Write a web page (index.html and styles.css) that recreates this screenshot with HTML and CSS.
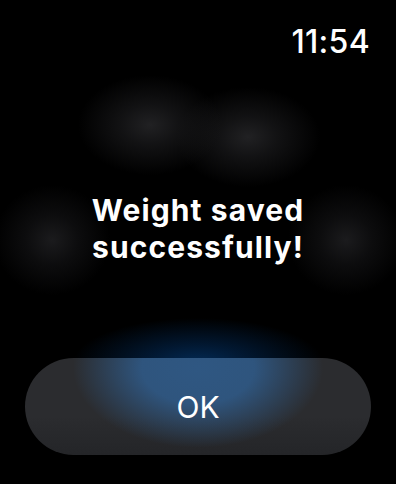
FILE: index.html
```html
<!DOCTYPE html>
<html>
<head>
<meta charset="utf-8">
<link rel="stylesheet" href="styles.css">
</head>
<body>
<div class="screen">
  <div class="status"><span class="time">11:54</span></div>
  <div class="message">Weight saved<br>successfully!</div>
  <div class="actions"><button class="ok">OK</button></div>
</div>
</body>
</html>
```
FILE: styles.css
```css
html, body {
  margin: 0;
  padding: 0;
  width: 396px;
  height: 484px;
  overflow: hidden;
}
body {
  background-color: #000;
  background-image:
    radial-gradient(ellipse 72px 50px at 150px 125px, rgba(33,33,35,1) 0%, rgba(26,26,28,0.7) 40%, rgba(0,0,0,0) 100%),
    radial-gradient(ellipse 72px 50px at 248px 137px, rgba(33,33,35,1) 0%, rgba(26,26,28,0.7) 40%, rgba(0,0,0,0) 100%),
    radial-gradient(ellipse 58px 55px at 52px 240px, rgba(27,27,29,1) 0%, rgba(21,21,23,0.6) 45%, rgba(0,0,0,0) 100%),
    radial-gradient(ellipse 58px 55px at 346px 240px, rgba(27,27,29,1) 0%, rgba(21,21,23,0.6) 45%, rgba(0,0,0,0) 100%),
    radial-gradient(ellipse 125px 45px at 198px 363px, rgba(3,42,84,1) 0%, rgba(2,30,62,0.8) 40%, rgba(0,0,0,0) 100%);
  font-family: Inter, "Noto Sans", sans-serif;
  color: #fff;
}
.screen {
  display: flex;
  flex-direction: column;
  height: 484px;
  box-sizing: border-box;
  padding: 23px 25px 0 25px;
}
.status {
  display: flex;
  justify-content: flex-end;
  padding-right: 1px;
}
.time {
  font-size: 32px;
  font-weight: 500;
  line-height: 38px;
  letter-spacing: 0.3px;
}
.message {
  margin-top: 131px;
  text-align: center;
  font-size: 30px;
  font-weight: 700;
  line-height: 37px;
  letter-spacing: 1.1px;
}
.actions {
  margin-top: 92px;
  display: flex;
}
.ok {
  flex: 1;
  height: 97px;
  border: 0;
  border-radius: 48.5px;
  background-color: #2b2c2f;
  background-image:
    radial-gradient(ellipse 125px 80px at 50% 10%, rgba(47,87,130,1) 0%, rgba(47,87,130,0.95) 45%, rgba(47,87,130,0) 100%),
    linear-gradient(to bottom, rgba(42,43,46,0) 60%, #242528 100%);
  color: #fff;
  font-family: Inter, "Noto Sans", sans-serif;
  font-size: 30px;
  font-weight: 400;
  padding: 0;
}
```
